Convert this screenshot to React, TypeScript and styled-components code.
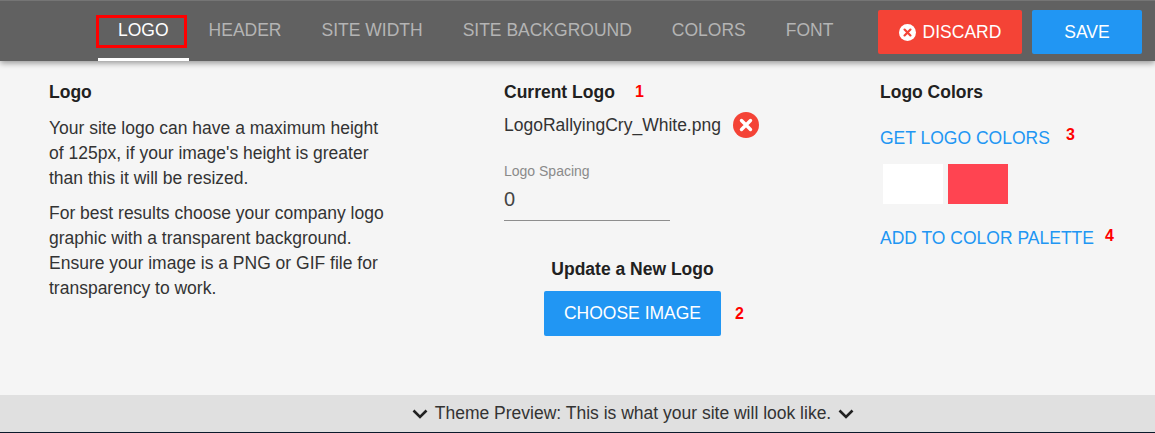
import React from "react";
import styled, { createGlobalStyle } from "styled-components";

const Global = createGlobalStyle`
  html, body { margin: 0; padding: 0; background: #f5f5f5; }
  body { font-family: "Liberation Sans", Arial, sans-serif; color: #212121; }
  * { box-sizing: border-box; }
`;

const Page = styled.div`
  width: 1155px;
  height: 433px;
  display: flex;
  flex-direction: column;
  overflow: hidden;
  background: #f5f5f5;
`;

const Toolbar = styled.header`
  position: relative;
  z-index: 1;
  height: 61px;
  flex: none;
  display: flex;
  align-items: stretch;
  justify-content: space-between;
  padding: 0 13px 0 98px;
  background: #616161;
  border-top: 1px solid #757575;
  box-shadow: 0 2px 6px rgba(0, 0, 0, 0.4);
`;

const Tabs = styled.nav`
  display: flex;
`;

const Tab = styled.div<{ $active?: boolean }>`
  position: relative;
  display: flex;
  align-items: center;
  padding: 2px 20px 0;
  font-size: 17.5px;
  color: ${(p) => (p.$active ? "#ffffff" : "#b4b4b4")};
  border-bottom: 3px solid ${(p) => (p.$active ? "#ffffff" : "transparent")};
`;

const Highlight = styled.span`
  position: absolute;
  left: -2px;
  top: 14px;
  width: 91px;
  height: 33px;
  border: 3px solid #ff0000;
`;

const Actions = styled.div`
  display: flex;
  gap: 10px;
  padding-top: 9px;
`;

const ActionButton = styled.button<{ $color: string; $width: number }>`
  width: ${(p) => p.$width}px;
  height: 44px;
  display: flex;
  align-items: center;
  justify-content: center;
  gap: 7px;
  border: 0;
  border-radius: 2px;
  padding: 0;
  background: ${(p) => p.$color};
  color: #fff;
  font: 17.5px "Liberation Sans", Arial, sans-serif;
`;

const Content = styled.main`
  flex: 1;
  display: grid;
  grid-template-columns: 455px 376px 1fr;
  padding: 21px 0 0 49px;
`;

const Column = styled.section`
  display: flex;
  flex-direction: column;
  align-items: flex-start;
`;

const Heading = styled.h3`
  position: relative;
  margin: 0;
  font-size: 17.5px;
  line-height: 21px;
  font-weight: 700;
  color: #212121;
`;

const Paragraph = styled.p`
  width: 345px;
  margin: 0 0 10px;
  font-size: 17.5px;
  line-height: 25px;
  color: #333333;
  &:first-of-type { margin-top: 13px; }
`;

const FileRow = styled.div`
  display: flex;
  align-items: center;
  gap: 12px;
  height: 28px;
  margin-top: 8px;
  font-size: 17.5px;
  color: #333333;
`;

const Field = styled.div`
  width: 166px;
  height: 58px;
  margin-top: 24px;
  border-bottom: 1px solid #8e8e8e;
`;

const FieldLabel = styled.div`
  font-size: 14px;
  line-height: 17px;
  color: #8a8a8a;
`;

const FieldValue = styled.div`
  margin-top: 7px;
  font-size: 20px;
  line-height: 24px;
  color: #444444;
`;

const UploadBlock = styled.div`
  align-self: stretch;
  width: 257px;
  margin-top: 38px;
  display: flex;
  flex-direction: column;
  align-items: center;
`;

const UploadTitle = styled.div`
  font-size: 17.5px;
  line-height: 20px;
  font-weight: 700;
  color: #212121;
`;

const ChooseButton = styled.button`
  position: relative;
  width: 177px;
  height: 45px;
  margin-top: 12px;
  border: 0;
  border-radius: 2px;
  background: #2196f3;
  color: #fff;
  font: 17.5px "Liberation Sans", Arial, sans-serif;
  padding: 0;
`;

const LinkText = styled.a<{ $gap?: number }>`
  position: relative;
  margin-top: ${(p) => p.$gap ?? 0}px;
  font-size: 17.5px;
  line-height: 22px;
  color: #2196f3;
`;

const Swatches = styled.div`
  display: flex;
  gap: 5px;
  margin: 15px 0 23px 3px;
`;

const Swatch = styled.div<{ $color: string }>`
  width: 60px;
  height: 40px;
  background: ${(p) => p.$color};
`;

const Marker = styled.span<{ $left: number; $top: number }>`
  position: absolute;
  left: ${(p) => p.$left}px;
  top: ${(p) => p.$top}px;
  font: 700 16px/18px "Liberation Sans", Arial, sans-serif;
  color: #ff0000;
`;

const PreviewBar = styled.footer`
  height: 38px;
  flex: none;
  display: flex;
  align-items: center;
  justify-content: center;
  gap: 7px;
  padding-left: 111px;
  background: #e0e0e0;
  border-bottom: 1px solid #0b1a2b;
  font-size: 17.5px;
  color: #333333;
`;

const Chevron = () => (
  <svg width="16" height="12" viewBox="0 0 16 12" fill="none" stroke="#212121" strokeWidth="2.6">
    <path d="M1.5 2.5 8 9l6.5-6.5" />
  </svg>
);

const RemoveIcon = ({ size, bg, fg }: { size: number; bg: string; fg: string }) => (
  <svg width={size} height={size} viewBox="0 0 26 26">
    <circle cx="13" cy="13" r="13" fill={bg} />
    <path d="M8.5 8.5l9 9M17.5 8.5l-9 9" stroke={fg} strokeWidth="3.4" strokeLinecap="round" />
  </svg>
);

export default function App() {
  return (
    <Page>
      <Global />
      <Toolbar>
        <Tabs>
          <Tab $active>
            LOGO
            <Highlight />
          </Tab>
          <Tab>HEADER</Tab>
          <Tab>SITE WIDTH</Tab>
          <Tab>SITE BACKGROUND</Tab>
          <Tab>COLORS</Tab>
          <Tab>FONT</Tab>
        </Tabs>
        <Actions>
          <ActionButton $color="#f44336" $width={144}>
            <RemoveIcon size={17} bg="#ffffff" fg="#f44336" />
            DISCARD
          </ActionButton>
          <ActionButton $color="#2196f3" $width={110}>SAVE</ActionButton>
        </Actions>
      </Toolbar>
      <Content>
        <Column>
          <Heading>Logo</Heading>
          <Paragraph>
            Your site logo can have a maximum height of 125px, if your image's height is greater than this it will be resized.
          </Paragraph>
          <Paragraph>
            For best results choose your company logo graphic with a transparent background. Ensure your image is a PNG or GIF file for transparency to work.
          </Paragraph>
        </Column>
        <Column>
          <Heading>
            Current Logo
            <Marker $left={131} $top={1}>1</Marker>
          </Heading>
          <FileRow>
            LogoRallyingCry_White.png
            <RemoveIcon size={26} bg="#f44336" fg="#ffffff" />
          </FileRow>
          <Field>
            <FieldLabel>Logo Spacing</FieldLabel>
            <FieldValue>0</FieldValue>
          </Field>
          <UploadBlock>
            <UploadTitle>Update a New Logo</UploadTitle>
            <ChooseButton>
              CHOOSE IMAGE
              <Marker $left={191} $top={14}>2</Marker>
            </ChooseButton>
          </UploadBlock>
        </Column>
        <Column>
          <Heading>Logo Colors</Heading>
          <LinkText $gap={24}>
            GET LOGO COLORS
            <Marker $left={186} $top={-1}>3</Marker>
          </LinkText>
          <Swatches>
            <Swatch $color="#ffffff" />
            <Swatch $color="#ff4451" />
          </Swatches>
          <LinkText>
            ADD TO COLOR PALETTE
            <Marker $left={225} $top={0}>4</Marker>
          </LinkText>
        </Column>
      </Content>
      <PreviewBar>
        <Chevron />
        Theme Preview: This is what your site will look like.
        <Chevron />
      </PreviewBar>
    </Page>
  );
}
